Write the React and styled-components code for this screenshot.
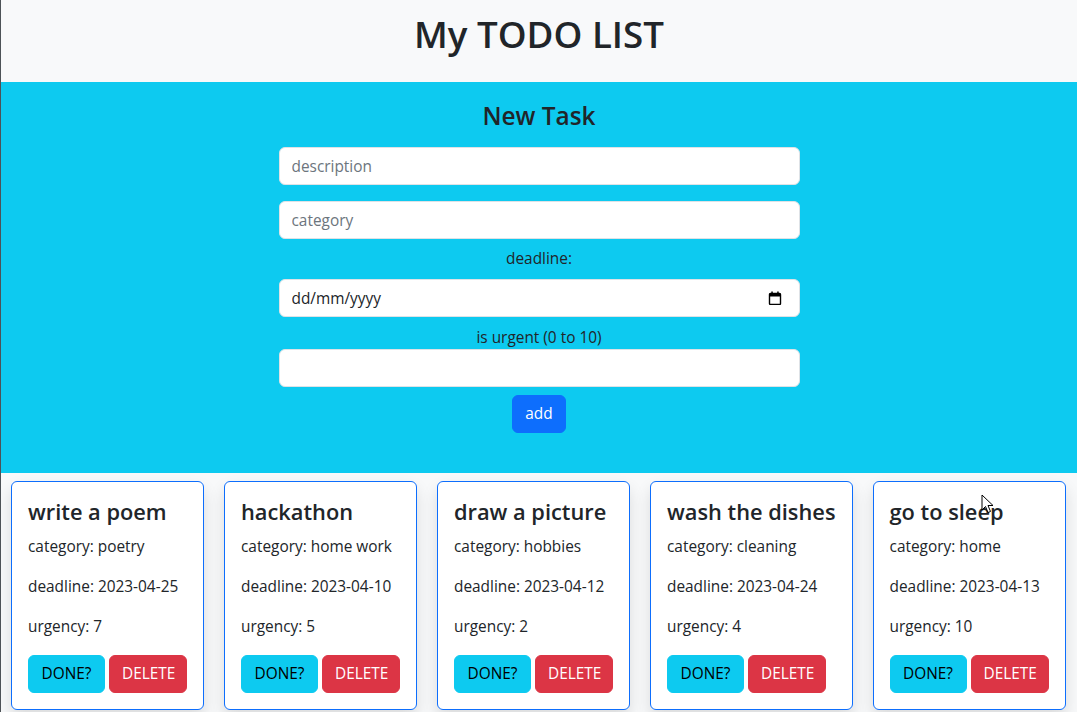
import React from "react";
import styled, { createGlobalStyle } from "styled-components";

const GlobalStyle = createGlobalStyle`
  *, *::before, *::after { box-sizing: border-box; }
  html, body { margin: 0; padding: 0; }
  body {
    font-family: "Open Sans", "Noto Sans", sans-serif;
    font-size: 15.4px;
    line-height: 24px;
    color: #212529;
    background: #f8f9fa;
    overflow: hidden;
  }
`;

const Page = styled.div`
  position: relative;
  height: 712px;
  overflow: hidden;
  border-left: 1px solid #4d5257;
  background: #f8f9fa;
`;

const Header = styled.header`
  height: 82px;
  padding-top: 12px;
  background: #f8f9fa;
  text-align: center;
`;

const MainTitle = styled.h1`
  margin: 0;
  font-size: 36.7px;
  font-weight: 600;
  line-height: 45px;
  color: #212529;
`;

const FormSection = styled.section`
  background: #0dcaf0;
  height: 391px;
  padding-top: 19px;
  display: flex;
  justify-content: center;
`;

const Form = styled.form`
  width: 521px;
  display: flex;
  flex-direction: column;
  align-items: stretch;
`;

const SectionTitle = styled.h3`
  margin: 0 0 16px;
  font-size: 24.4px;
  font-weight: 600;
  line-height: 30px;
  text-align: center;
`;

const TextInput = styled.input`
  display: block;
  width: 100%;
  height: 38px;
  margin: ${(p) => p.$mt || 0}px 0 0;
  padding: 6px 12px;
  font-family: inherit;
  font-size: 15.4px;
  line-height: 24px;
  color: #212529;
  background: #fff;
  border: 1px solid #dee2e6;
  border-radius: 6px;
  outline: none;
  &::placeholder { color: #6c757d; opacity: 1; }
`;

const DateWrap = styled.div`
  position: relative;
  margin-top: ${(p) => p.$mt}px;
`;

const CalendarIcon = styled.svg`
  position: absolute;
  right: 18px;
  top: 12px;
  width: 14px;
  height: 14px;
  pointer-events: none;
`;

const FieldLabel = styled.label`
  display: block;
  margin-top: ${(p) => p.$mt}px;
  text-align: center;
  line-height: 24px;
`;

const Button = styled.button`
  display: inline-block;
  height: 38px;
  ${(p) => (p.$w ? `width: ${p.$w}px;` : "")}
  padding: 6px 12px;
  font-family: inherit;
  font-size: 15.4px;
  line-height: 24px;
  border: 1px solid ${(p) => p.$bg};
  border-radius: 6px;
  background: ${(p) => p.$bg};
  color: ${(p) => p.$fg};
  cursor: pointer;
`;

const AddButton = styled(Button)`
  align-self: center;
  margin-top: 8px;
  min-width: 53px;
`;

const CardList = styled.div`
  display: flex;
  flex-wrap: nowrap;
  align-items: flex-start;
  gap: 20px;
  padding: 8px 0 0 10px;
`;

const Card = styled.article`
  flex: none;
  background: #fff;
  border: 1px solid #0d6efd;
  border-radius: 6px;
  padding: 16px;
  box-shadow: 0 0.5rem 1rem rgba(0, 0, 0, 0.12);
`;

const CardTitle = styled.h4`
  margin: 0 0 8px;
  font-size: 21.8px;
  font-weight: 600;
  line-height: 28.8px;
  white-space: nowrap;
`;

const CardLine = styled.p`
  margin: 0 0 16px;
  line-height: 24px;
  white-space: nowrap;
`;

const ButtonRow = styled.div`
  display: flex;
  gap: 4px;
`;

const Cursor = styled.svg`
  position: absolute;
  left: 980px;
  top: 494px;
  width: 13px;
  height: 20px;
  pointer-events: none;
`;

const tasks = [
  { title: "write a poem", category: "poetry", deadline: "2023-04-25", urgency: 7 },
  { title: "hackathon", category: "home work", deadline: "2023-04-10", urgency: 5 },
  { title: "draw a picture", category: "hobbies", deadline: "2023-04-12", urgency: 2 },
  { title: "wash the dishes", category: "cleaning", deadline: "2023-04-24", urgency: 4 },
  { title: "go to sleep", category: "home", deadline: "2023-04-13", urgency: 10 },
];

export default function App() {
  return (
    <>
      <GlobalStyle />
      <Page>
        <Header>
          <MainTitle>My TODO LIST</MainTitle>
        </Header>
        <FormSection>
          <Form onSubmit={(e) => e.preventDefault()}>
            <SectionTitle>New Task</SectionTitle>
            <TextInput placeholder="description" />
            <TextInput $mt={16} placeholder="category" />
            <FieldLabel $mt={8}>deadline:</FieldLabel>
            <DateWrap $mt={8}>
              <TextInput defaultValue="dd/mm/yyyy" />
              <CalendarIcon viewBox="0 0 14 14">
                <rect x="1.5" y="2.5" width="11" height="11" rx="1" fill="none" stroke="#000" strokeWidth="1.4" />
                <rect x="1.5" y="2.5" width="11" height="3" fill="#000" />
                <rect x="3.3" y="0.5" width="1.5" height="3" fill="#000" />
                <rect x="9.2" y="0.5" width="1.5" height="3" fill="#000" />
              </CalendarIcon>
            </DateWrap>
            <FieldLabel $mt={9}>is urgent (0 to 10)</FieldLabel>
            <TextInput $mt={-1} />
            <AddButton type="submit" $bg="#0d6efd" $fg="#fff">add</AddButton>
          </Form>
        </FormSection>
        <CardList>
          {tasks.map((t) => (
            <Card key={t.title}>
              <CardTitle>{t.title}</CardTitle>
              <CardLine>category: {t.category}</CardLine>
              <CardLine>deadline: {t.deadline}</CardLine>
              <CardLine>urgency: {t.urgency}</CardLine>
              <ButtonRow>
                <Button $w={77} $bg="#0dcaf0" $fg="#000">DONE?</Button>
                <Button $w={78} $bg="#dc3545" $fg="#fff">DELETE</Button>
              </ButtonRow>
            </Card>
          ))}
        </CardList>
        <Cursor viewBox="0 0 13 20">
          <path d="M1 1 L1 16 L4.5 12.5 L7 18.5 L9.5 17.5 L7 11.5 L12 11.5 Z" fill="#fff" stroke="#000" strokeWidth="1" strokeLinejoin="round" />
        </Cursor>
      </Page>
    </>
  );
}
